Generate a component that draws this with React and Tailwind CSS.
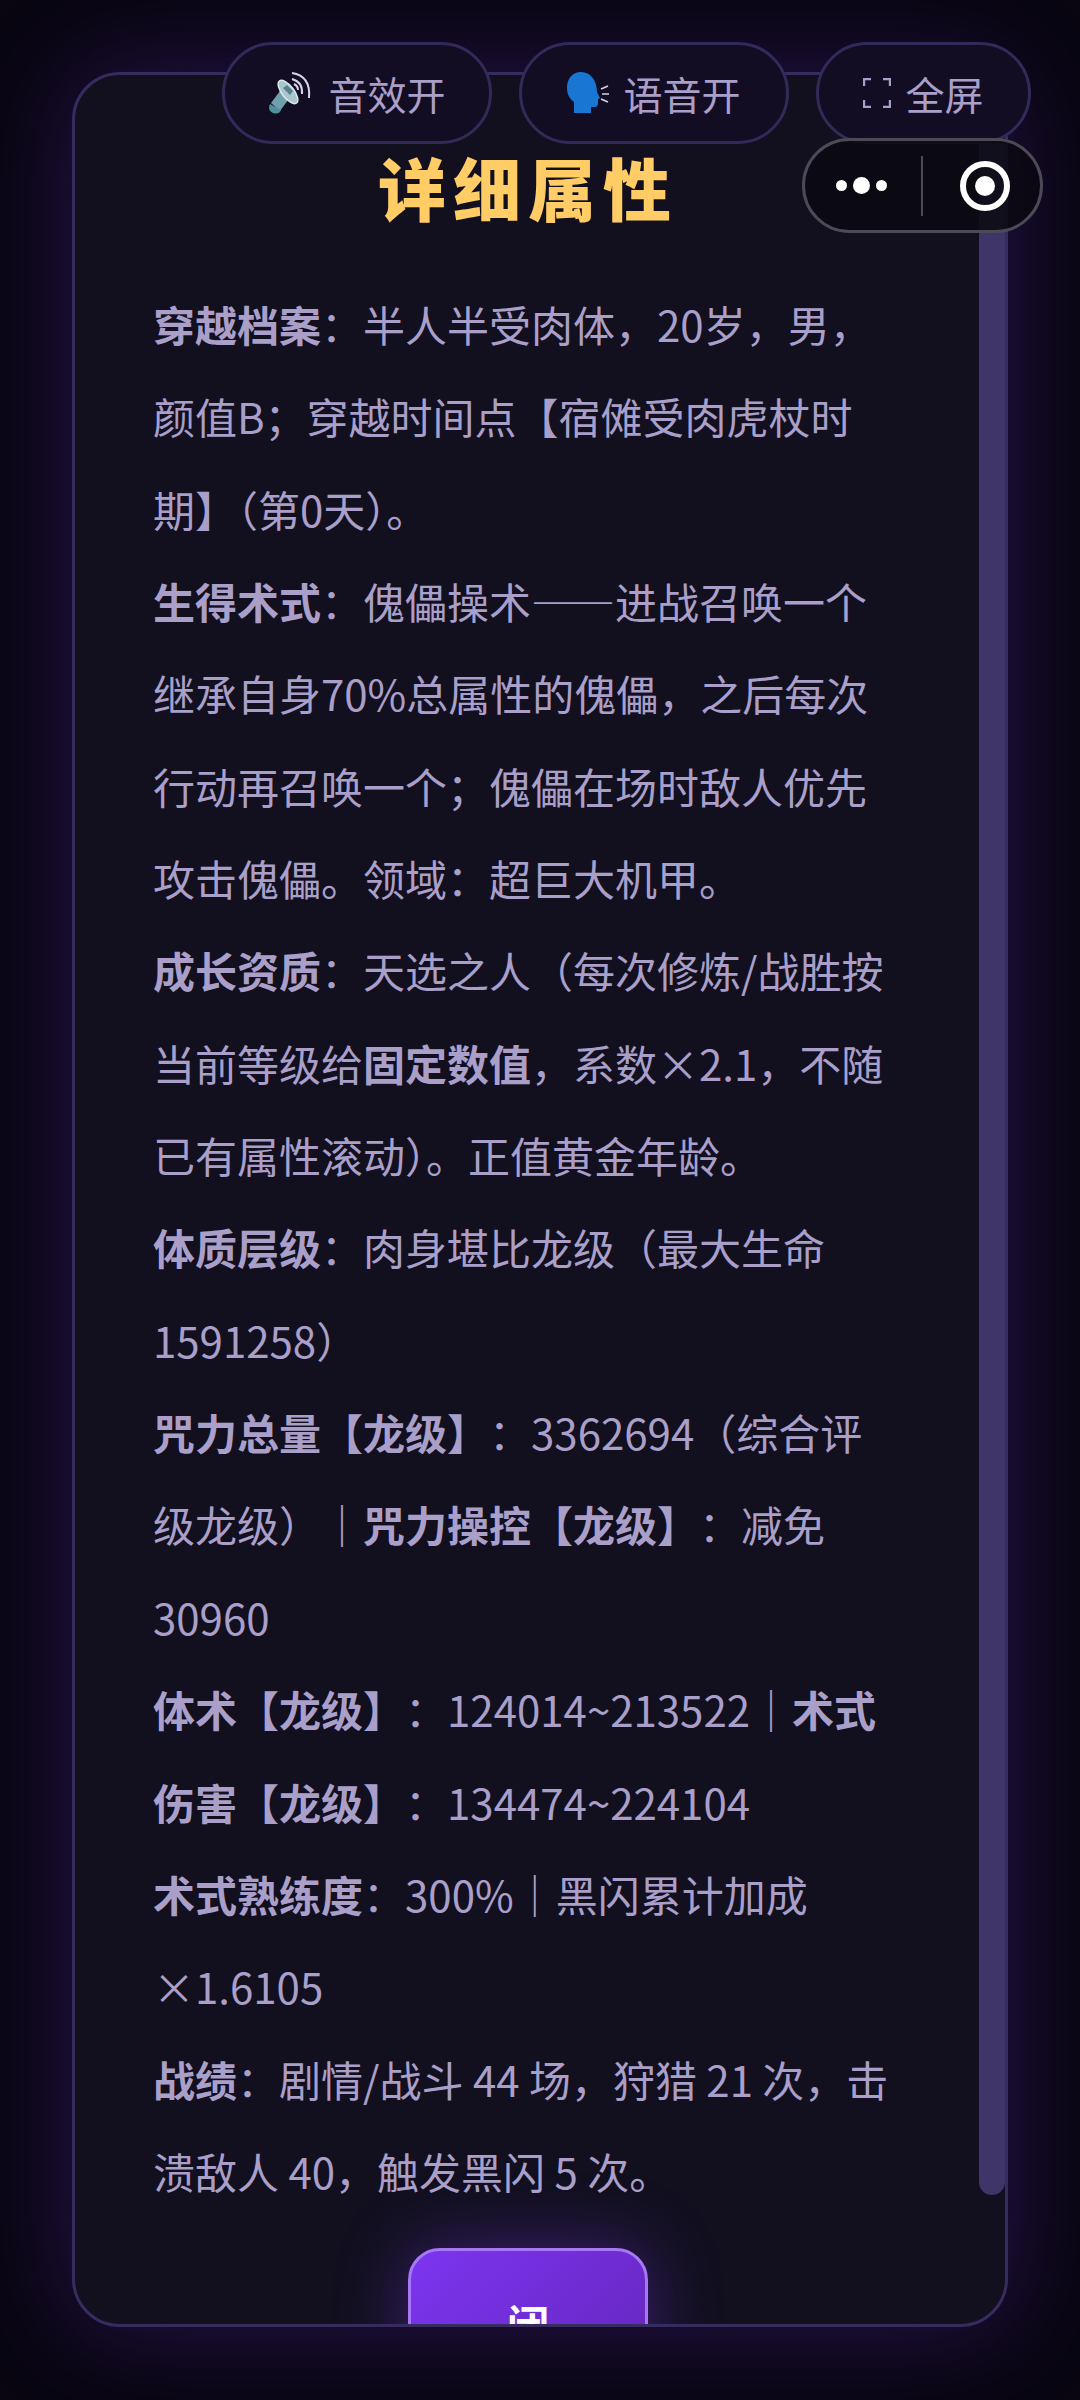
const fontStack = { fontFamily: '"Noto Sans CJK SC", "Noto Sans", sans-serif' };

const SpeakerIcon = () => (
  <svg width="46" height="44" viewBox="0 0 46 44" fill="none">
    <path d="M3 32 L12 40 L23 25 L15 16 Z" fill="#6f9fab" />
    <path d="M2 33 Q-1 39 5 42 Q11 44 13 39 Z" fill="#4f8f9e" />
    <ellipse cx="20" cy="21" rx="6" ry="14" transform="rotate(-38 20 21)" fill="#a9c6ce" stroke="#dbe7ea" strokeWidth="1.5" />
    <path d="M15 17 L22 24 L25 20 L19 14 Z" fill="#55808c" />
    <path d="M24 8 Q35 11 34 23" stroke="#d8d2e6" strokeWidth="2" />
    <path d="M24 2 Q43 5 41 27" stroke="#d8d2e6" strokeWidth="2" />
    <path d="M26 13 Q30 15 30 19" stroke="#d8d2e6" strokeWidth="2" />
  </svg>
);

const SpeakingHeadIcon = () => (
  <svg width="42" height="44" viewBox="0 0 42 44" fill="none">
    <path d="M14 1 C5 1 0 8 0 17 C0 24 3 28 7 31 L7 42 L24 42 L24 36 L28 36 Q31 36 31 32 L31 28 L33 27 L30 21 C30 10 24 1 14 1 Z" fill="#1976d2" />
    <path d="M34 18 L41 15 M35 23 L42 23 M34 28 L41 31" stroke="#d6d0e4" strokeWidth="1.6" />
  </svg>
);

const FullscreenIcon = () => (
  <svg width="28" height="30" viewBox="0 0 28 30" fill="none" stroke="#a99fc9" strokeWidth="2.4">
    <path d="M8 1 H1 V8 M20 1 H27 V8 M1 22 V29 H8 M27 22 V29 H20" />
  </svg>
);

const Pill = ({ icon, label, className }) => (
  <div className={`flex h-[102px] items-center justify-center gap-[14px] rounded-full border-[3px] border-[#322a58] bg-[#130d24] text-[39px] text-[#a99fc9] ${className}`}>
    {icon}
    <span>{label}</span>
  </div>
);

const paragraphs = [
  [["b", "穿越档案"], "：半人半受肉体，20岁，男，颜值B；穿越时间点【宿傩受肉虎杖时期】（第0天）。"],
  [["b", "生得术式"], "：傀儡操术——进战召唤一个继承自身70%总属性的傀儡，之后每次行动再召唤一个；傀儡在场时敌人优先攻击傀儡。领域：超巨大机甲。"],
  [["b", "成长资质"], "：天选之人（每次修炼/战胜按当前等级给", ["b", "固定数值"], "，系数×2.1，不随已有属性滚动）。正值黄金年龄。"],
  [["b", "体质层级"], "：肉身堪比龙级（最大生命 1591258）"],
  [["b", "咒力总量【龙级】"], "：3362694（综合评级龙级）｜", ["b", "咒力操控【龙级】"], "：减免 30960"],
  [["b", "体术【龙级】"], "：124014~213522｜", ["b", "术式伤害【龙级】"], "：134474~224104"],
  [["b", "术式熟练度"], "：300%｜黑闪累计加成 ×1.6105"],
  [["b", "战绩"], "：剧情/战斗 44 场，狩猎 21 次，击溃敌人 40，触发黑闪 5 次。"],
];

export default function App() {
  return (
    <div lang="zh-CN" style={fontStack} className="relative h-[2400px] w-[1080px] overflow-hidden bg-[#090612] pt-[72px] pl-[72px]">
      <div className="relative h-[2255px] w-[936px] overflow-hidden rounded-[48px] border-[3px] border-[#362c5e] bg-[#12101f] shadow-[0_0_100px_rgba(100,40,190,0.35)]">
        <div className="w-[906px]">
          <h1 className="mt-[67px] text-center text-[68px] leading-[90px] font-black tracking-[7px] text-[#ffcc66]">详细属性</h1>
          <div className="mt-[46px] w-[817px] pl-[78px] text-[42px] leading-[92.35px] font-normal text-[#a99fc9]">
            {paragraphs.map((parts, i) => (
              <p key={i} className={i === 4 || i === 5 ? "[text-spacing-trim:space-all]" : ""}>
                {parts.map((part, j) =>
                  Array.isArray(part) ? <strong key={j} className="font-bold">{part[1]}</strong> : <span key={j}>{part}</span>
                )}
              </p>
            ))}
          </div>
          <div className="mx-auto mt-[31px] h-[240px] w-[240px] rounded-[32px] border-[3px] border-[#a678f5] bg-gradient-to-br from-[#7c35f0] to-[#5f22b0] pt-[40px] text-center text-[42px] font-bold text-white shadow-[0_0_70px_rgba(124,53,240,0.4)]">
            闭
          </div>
        </div>
        <div className="absolute top-[68px] right-0 h-[2052px] w-[26px] rounded-b-full bg-[#3f3568]" />
      </div>

      <div className="absolute top-[42px] right-[49px] flex gap-[27px]">
        <Pill icon={<SpeakerIcon />} label="音效开" className="w-[270px]" />
        <Pill icon={<SpeakingHeadIcon />} label="语音开" className="w-[270px]" />
        <Pill icon={<FullscreenIcon />} label="全屏" className="w-[215px]" />
      </div>

      <div className="absolute top-[138px] left-[802px] flex h-[95px] w-[241px] items-center rounded-full border-[3px] border-[#4d4a57] bg-[#0a0810]/85">
        <div className="flex w-[116px] shrink-0 items-center justify-center gap-[6px] pr-[4px]">
          <span className="h-[11px] w-[11px] rounded-full bg-white" />
          <span className="h-[17px] w-[17px] rounded-full bg-white" />
          <span className="h-[11px] w-[11px] rounded-full bg-white" />
        </div>
        <div className="h-[60px] w-[2px] bg-[#4d4a57]" />
        <div className="flex flex-1 items-center justify-center pl-[6px]">
          <div className="flex h-[50px] w-[50px] items-center justify-center rounded-full border-[6px] border-white">
            <span className="h-[20px] w-[20px] rounded-full bg-white" />
          </div>
        </div>
      </div>
    </div>
  );
}
